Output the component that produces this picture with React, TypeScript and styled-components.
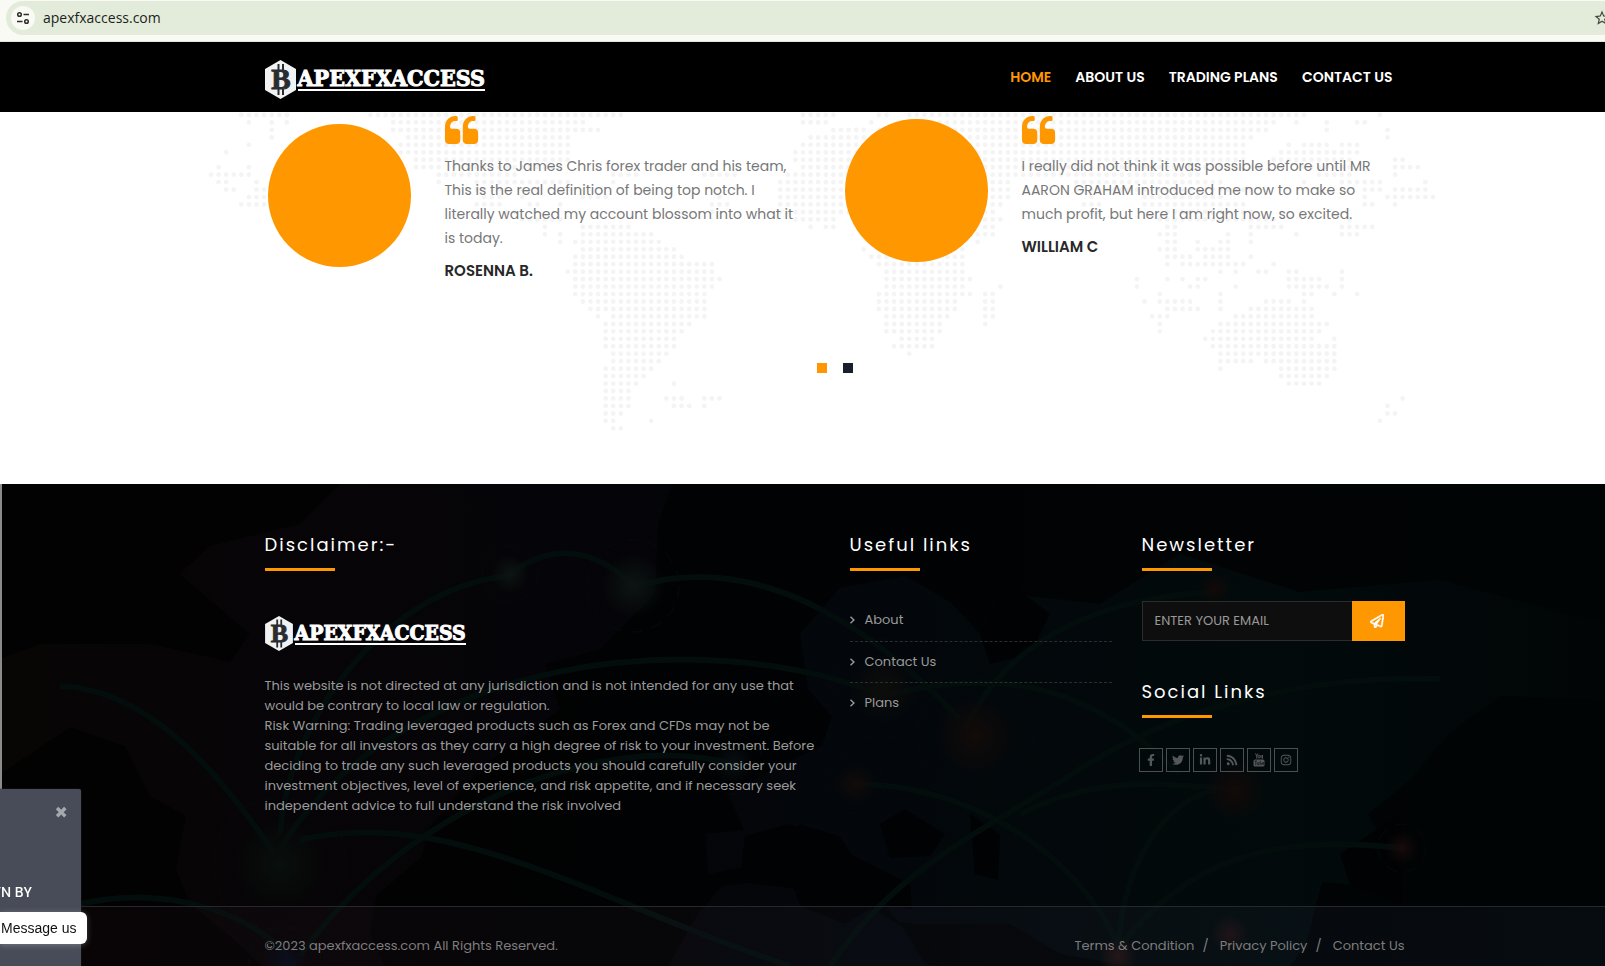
import React from 'react';
import styled, { createGlobalStyle } from 'styled-components';
import {
  FaFacebookF,
  FaInstagram,
  FaLinkedinIn,
  FaRegPaperPlane,
  FaRss,
  FaTwitter,
} from 'react-icons/fa';
import { MdStarBorder } from 'react-icons/md';

const accent = '#ff9800';
const bodyFont = "Poppins, 'Open Sans', sans-serif";

const GlobalStyle = createGlobalStyle`
  *, *::before, *::after { box-sizing: border-box; }
  body { margin: 0; background: #fff; font-family: ${bodyFont}; overflow-x: hidden; }
  h2, p, ul { margin: 0; padding: 0; }
  a { color: inherit; text-decoration: none; }
  button, input { font-family: inherit; }
`;

const Page = styled.div`
  display: flex;
  flex-direction: column;
  min-height: 100vh;
`;

/* The page content is centred in a view that starts 64px in. */
const Gutter = styled.div`
  padding-left: 64px;
`;

const Container = styled.div`
  position: relative;
  max-width: 1140px;
  margin: 0 auto;
`;

/* ---------- address bar ---------- */

const AddressBar = styled.div`
  padding: 1px 0 6px 6px;
  background: #f8faf3;
  border-bottom: 1px solid #dfe5da;
  overflow: hidden;
`;

const AddressPill = styled.div`
  display: flex;
  align-items: center;
  gap: 8px;
  height: 34px;
  padding-left: 5px;
  border-radius: 17px 0 0 17px;
  background: #e3ecdb;
  color: #1d1f1b;
`;

const SiteInfo = styled.button`
  display: grid;
  place-items: center;
  width: 24px;
  height: 24px;
  padding: 0;
  border: 0;
  border-radius: 50%;
  background: #f8faf3;
`;

const Address = styled.span`
  flex: 1;
  padding-bottom: 2px;
  font: 14px 'Open Sans', sans-serif;
`;

const Bookmark = styled.button`
  display: flex;
  margin-right: -6px;
  padding: 0;
  border: 0;
  background: none;
  color: #43473f;
`;

/* ---------- header ---------- */

const Header = styled.header`
  background: #000;
`;

const HeaderRow = styled(Container)`
  display: flex;
  align-items: center;
  justify-content: space-between;
  height: 70px;
`;

const HeaderLogo = styled.div`
  display: flex;
  padding-top: 4px;
`;

const Nav = styled.nav`
  display: flex;
  gap: 24px;
  padding-right: 12px;
`;

const NavLink = styled.a<{ $active?: boolean }>`
  color: ${(p) => (p.$active ? accent : '#fff')};
  font-size: 14px;
  font-weight: 600;
  line-height: 24px;
`;

const LogoLink = styled.a`
  display: inline-flex;
  align-items: center;
  gap: 2px;
`;

const LogoText = styled.span<{ $small?: boolean }>`
  border-bottom: 2px solid #fff;
  color: #fff;
  font-family: Algerian, 'DejaVu Serif Condensed', 'DejaVu Serif', serif;
  font-weight: 700;
  font-size: ${(p) => (p.$small ? 21 : 23)}px;
  line-height: ${(p) => (p.$small ? 20 : 22)}px;
  -webkit-text-stroke: 1px #fff;
`;

/* ---------- testimonials ---------- */

const Testimonials = styled.section`
  padding-bottom: 111px;
  background: #fff;
  overflow: hidden;
`;

const DotMap = styled.svg`
  position: absolute;
  top: 0;
  left: -60px;
`;

const Slides = styled.div`
  position: relative;
  display: grid;
  grid-template-columns: 1fr 1fr;
  gap: 14px;
`;

const Slide = styled.figure`
  display: grid;
  grid-template-columns: 143px 1fr;
  gap: 34px;
  margin: 0;
  padding: 4px 30px 0 3px;
`;

const Avatar = styled.div<{ $drop: number }>`
  height: 143px;
  margin-top: ${(p) => p.$drop}px;
  border-radius: 50%;
  background: ${accent};
`;

const QuoteMark = styled.svg`
  display: block;
  width: 34px;
  height: 28px;
  margin-bottom: 10px;
  fill: ${accent};
`;

const Quote = styled.blockquote`
  margin: 0 0 9px;
  color: #777;
  font-size: 14px;
  line-height: 24px;
`;

const Author = styled.figcaption`
  color: #282828;
  font-size: 15px;
  font-weight: 600;
  line-height: 24px;
`;

const Pager = styled.div`
  position: relative;
  display: flex;
  justify-content: center;
  gap: 16px;
  margin-top: 80px;
`;

const PagerDot = styled.button<{ $active?: boolean }>`
  width: 10px;
  height: 10px;
  padding: 0;
  border: 0;
  background: ${(p) => (p.$active ? accent : '#18202d')};
`;

/* ---------- footer ---------- */

const Footer = styled.footer`
  position: relative;
  flex: 1;
  display: flex;
  flex-direction: column;
  background: linear-gradient(90deg, #030202, #010203 45%, #010405);
  color: #9a9a9a;
  overflow: hidden;
`;

const WorldArt = styled.svg`
  position: absolute;
  inset: 0;
  width: 100%;
  height: 100%;
`;

const FooterMain = styled(Gutter)`
  position: relative;
  min-height: 422px;
  padding-top: 49px;
  border-left: 2px solid #8b8b8b;
  padding-left: 62px;
`;

const FooterColumns = styled(Container)`
  display: grid;
  grid-template-columns: 555fr 262fr 263fr;
  gap: 30px;
`;

const Heading = styled.h2`
  color: #fff;
  font-size: 18px;
  font-weight: 400;
  letter-spacing: 2px;
  line-height: 24px;

  &::after {
    content: '';
    display: block;
    width: 70px;
    height: 3px;
    margin-top: 11px;
    background: ${accent};
  }
`;

const FooterLogo = styled.div`
  display: flex;
  margin: 45px 0 25px;
`;

const Legal = styled.p`
  font-size: 13px;
  line-height: 20px;
`;

const LinkList = styled.ul`
  margin-top: 29px;
  list-style: none;
`;

const LinkItem = styled.li`
  height: 41px;

  & + & {
    border-top: 1px dashed #2b2d2e;
  }
`;

const ListLink = styled.a`
  display: flex;
  align-items: center;
  gap: 9px;
  height: 40px;
  font-size: 13px;
`;

const Subscribe = styled.form`
  display: grid;
  grid-template-columns: 1fr 53px;
  height: 40px;
  margin: 30px 0 39px;
`;

const EmailInput = styled.input`
  min-width: 0;
  padding: 0 12px;
  border: 1px solid #2c2c2c;
  border-right: 0;
  border-radius: 0;
  background: #0e0e0e;
  color: #999;
  font-size: 13px;

  &::placeholder {
    color: #999;
    opacity: 1;
  }
`;

const SendButton = styled.button`
  display: grid;
  place-items: center;
  padding: 0 2px 0 0;
  border: 0;
  background: ${accent};
  color: #fff;
  font-size: 14px;

  svg {
    stroke: #fff;
    stroke-width: 16px;
  }
`;

const Socials = styled.div`
  display: flex;
  gap: 3px;
  margin: 30px 0 0 -3px;
`;

const SocialLink = styled.a`
  display: grid;
  place-items: center;
  width: 24px;
  height: 24px;
  border: 1px solid #4c4f50;
  color: #55585a;
  font-size: 12px;
`;

const FooterBottom = styled(Gutter)`
  position: relative;
  flex: 1;
  padding-top: 27px;
  padding-bottom: 8px;
  border-top: 1px solid #26282b;
  background: linear-gradient(90deg, rgba(70, 30, 35, 0.09), rgba(60, 90, 130, 0.09));
  color: #7d7d7d;
  font-size: 13px;
  line-height: 24px;
`;

const BottomRow = styled(Container)`
  display: flex;
  justify-content: space-between;
`;

const BottomLinks = styled.nav`
  display: flex;

  a + a::before {
    content: '/';
    margin: 0 11px 0 8px;
  }
`;

/* ---------- floating widgets ---------- */

const Toast = styled.aside`
  position: fixed;
  left: 0;
  bottom: 0;
  display: flex;
  flex-direction: column;
  width: 81px;
  height: 177px;
  padding-top: 13px;
  border-radius: 0 2px 0 0;
  background: #484c58;
  color: #fff;
  box-shadow: 0 0 2px #222;
`;

const ToastClose = styled.button`
  align-self: flex-end;
  margin-right: 13px;
  padding: 0;
  border: 0;
  background: none;
  color: #a5a8ae;
  font: 16px/22px 'DejaVu Sans', sans-serif;
`;

const ToastText = styled.p`
  display: flex;
  justify-content: flex-end;
  width: 32px;
  margin-top: 57px;
  overflow: hidden;
  font-size: 14px;
  font-weight: 500;
  line-height: 22px;
  white-space: nowrap;
`;

const MessageButton = styled.button`
  position: fixed;
  left: 0;
  bottom: 22px;
  width: 87px;
  height: 32px;
  padding: 0 0 0 1px;
  border: 0;
  border-radius: 0 6px 6px 0;
  background: #fff;
  color: #111;
  font: 14px 'Liberation Sans', Arial, sans-serif;
  text-align: left;
  white-space: nowrap;
  box-shadow: 0 1px 6px rgba(255, 255, 255, 0.25);
`;

/* Dotted world map: one string per row, each entry a run of columns. */
const mapRows = [
  '4-10 21-54 78-82 88-89 92-144 154',
  '5 8 10 24-49 78-81 87 91-140 143 147 151-152',
  '8 24-51 82-86 88-139 147 155',
  '8 26-47 79-137 155',
  '5 25-47 78-136 142 144-147 149-151',
  '2 25-47 77-136 141-151',
  '27-47 77-136 140-150 156-157',
  '1 5 27-30 32-46 78-138 144-150 156-159',
  '0-5 30-40 53-56 65-69 76-130 146-150 156',
  '1-2 6 30 35-47 53 75-105 114-133 144 149-154 160',
  '2-3 6-7 35-38 41 75-105 114-137 152-154 156-160',
  '5-7 36-38 41 49-52 67 75-105 116 123-133 152 155-161',
  '4-7 35-38 42-43 46 66-68 75-104 115-117 123-136 152-153 156',
  '39-40 66 75-103 116-117 126-137',
  '41-46 77-82 100-104 125-140 150',
  '44 49-55 79 81-82 102-103 126-127 137-141 149-153',
  '44 46 49-58 101-103 125-127 134 137 143 149-151',
  '46 48-59 101 126-127 130 133-134 137',
  '49-61 86 88-99 125-127 130-134',
  '48-62 87-99 126-129 131-134 137',
  '48-66 88-99 126 128-136 140',
  '47-66 89-99 133 135 138-139 142-143 149',
  '48-67 89-100 122 126 128 130-131 142-146 149',
  '48-66 89-99 104 122 129-130 135 142-147 149',
  '48-65 88-100 102-103 125 133 144-145 148 151',
  '49-65 88-98 102-103 123 125-129 133 139-142 144',
  '50-65 88-98 102-103 126-130 133 137-145',
  '51 53-65 89-97 102-103 124-126 135-145',
  '52-63 89-96 102 125 133-147',
  '52-62 89-96 125 132-146',
  '52-61 91-95 131-145 148',
  '52-61 90-95 132-148',
  '53-60 92 133-148',
  '53-59 133-137 139-148',
  '52-58 133 141-148',
  '52-57 141-147',
  '52-56 61 142-146',
  '52-55',
  '52-55 60-62 65-67 157',
  '52-55 61-63 65 155',
  '52-54 155-156',
  '52-53 58 154',
  '53-54',
];
const colStep = 7.59;
const rowStep = 7.46;
const mapPath = mapRows
  .flatMap((row, r) =>
    row.split(' ').map((run) => {
      const [from, to = from] = run.split('-').map(Number);
      const x = 6 + from * colStep;
      return `M${x.toFixed(2)} ${(3 + r * rowStep).toFixed(2)}h${((to - from) * colStep + 0.01).toFixed(2)}`;
    }),
  )
  .join('');

const arcs = [
  'M510 90Q570 44 633 100',
  'M633 103C740 70 850 120 960 235',
  'M280 350C290 220 400 100 510 92',
  'M60 202C150 205 220 290 275 370',
  'M280 365C400 170 700 140 880 210',
  'M300 356C450 320 600 420 790 482',
  'M300 472C400 330 600 240 740 282',
  'M80 420C170 400 260 430 295 482',
  'M830 482C900 380 980 350 1080 285S1320 190 1440 195',
  'M855 300C970 300 1080 370 1120 465',
  'M870 215C1000 180 1090 200 1180 290',
  'M965 245C1010 150 1110 112 1215 108',
  'M1118 470C1120 380 1170 300 1235 305',
  'M1118 465C1190 370 1280 350 1402 364',
  'M1020 330C1100 290 1160 300 1235 305',
];

const nodes: [number, number, number, string][] = [
  [510, 90, 28, '#0d1412'],
  [633, 102, 46, '#0d1412'],
  [280, 380, 66, '#080f0c'],
  [883, 205, 50, '#0d0d0b'],
  [975, 252, 58, '#120b09'],
  [855, 300, 30, '#120b09'],
  [733, 280, 30, '#081013'],
  [1215, 105, 24, '#120a08'],
  [1235, 307, 44, '#120a08'],
  [1402, 364, 24, '#160a09'],
  [1230, 450, 28, '#1c0f10'],
  [1118, 472, 28, '#221210'],
  [285, 478, 36, '#060b1a'],
];

const landmasses = [
  'M0 175 40 160 150 160 230 178 250 150 180 90 210 62 300 40 340 0 672 0 658 40 655 110 600 165 545 180 560 225 480 285 428 345 422 372 376 412 370 448 384 482 262 482 228 450 190 420 176 385 186 332 150 312 125 262 70 243 0 290Z',
  'M668 482 698 430 722 402 790 394 800 422 845 440 872 424 905 445 935 482Z',
  'M706 350 744 346 728 310 770 286 822 262 832 232 808 205 800 150 840 104 905 92 950 118 990 160 1010 110 1100 120 1180 70 1300 108 1440 96 1605 140 1605 215 1500 212 1448 250 1410 296 1368 330 1392 372 1366 402 1322 398 1306 460 1290 482 1130 482 1060 470 1010 440 900 440 870 400 840 352 800 340 740 384 708 390Z',
];

const seas = [
  'M880 340 905 325 945 350 930 372 890 374Z',
  'M970 330 1000 350 998 396 975 390Z',
  'M745 352 790 340 850 370 910 400 912 425 880 420 800 405 740 398Z',
  'M900 438 925 480 940 482 915 440Z',
  'M980 150 1010 100 1050 130 1030 170 990 180Z',
  'M1340 370 1400 330 1402 420 1350 400Z',
];

const quotePath =
  'M768 832v384q0 80-56 136t-136 56h-384q-80 0-136-56t-56-136v-704q0-104 40.500-198.500t109.500-163.500 163.500-109.500 198.500-40.500h64q26 0 45 19t19 45v128q0 26-19 45t-45 19h-64q-106 0-181 75t-75 181v32q0 40 28 68t68 28h224q80 0 136 56t56 136z';

function BrandIcon({ width, height }: { width: number; height: number }) {
  return (
    <svg width={width} height={height} viewBox="0 0 31 39" aria-hidden="true">
      <path d="M15.500 0 31 9V30L15.500 39 0 30V9Z" fill="#f1f2f4" />
      <path d="M13.500 4v6M18 4v6M13.500 29v6M18 29v6" stroke="#2a2c30" strokeWidth="2" />
      <text
        x="16"
        y="29"
        textAnchor="middle"
        fontFamily="Liberation Serif, serif"
        fontWeight="700"
        fontSize="29"
        fill="#2a2c30"
        stroke="#2a2c30"
      >
        B
      </text>
    </svg>
  );
}

function Brand({ small }: { small?: boolean }) {
  return (
    <LogoLink href="#">
      <BrandIcon width={small ? 28 : 31} height={small ? 35 : 39} />
      <LogoText $small={small}>APEXFXACCESS</LogoText>
    </LogoLink>
  );
}

function Chevron() {
  return (
    <svg width="6" height="10" viewBox="0 0 6 10" fill="none" stroke="currentColor" strokeWidth="1.400" aria-hidden="true">
      <path d="M.5 1.800 3.900 5 .5 8.200" />
    </svg>
  );
}

/* Stacked emblem: small lettering marks over a rounded plate. */
function YoutubeStacked() {
  return (
    <svg width="12" height="14" viewBox="0 0 12 14" aria-hidden="true">
      <g fill="none" stroke="currentColor" strokeWidth="1">
        <path d="M2.500.5 3.700 3v2.500M4.900.5 3.700 3M8 2v2.500q.1.800 1.400.2M9.500 2v3.500" />
        <ellipse cx="6" cy="3.700" rx=".9" ry="1.500" />
      </g>
      <rect x=".5" y="6.500" width="11" height="7" rx="1.500" fill="currentColor" />
      <path d="M1.700 8h2.200M2.800 8v4.300M4.700 9.200v2.500h1.300V9.200M7.300 7.800v4M8.300 9.800v2M9.700 10.500h1v-1h-1v2.200h1" fill="none" stroke="#02070a" strokeWidth=".6" />
    </svg>
  );
}

const testimonials = [
  {
    drop: 8,
    author: 'ROSENNA B.',
    text: 'Thanks to James Chris forex trader and his team, This is the real definition of being top notch. I literally watched my account blossom into what it is today.',
  },
  {
    drop: 3,
    author: 'WILLIAM C',
    text: 'I really did not think it was possible before until MR AARON GRAHAM introduced me now to make so much profit, but here I am right now, so excited.',
  },
];

const socials = [
  { label: 'Facebook', Icon: FaFacebookF },
  { label: 'Twitter', Icon: FaTwitter },
  { label: 'LinkedIn', Icon: FaLinkedinIn },
  { label: 'RSS', Icon: FaRss },
  { label: 'YouTube', Icon: YoutubeStacked },
  { label: 'Instagram', Icon: FaInstagram },
];

export default function App() {
  return (
    <Page>
      <GlobalStyle />
      <AddressBar>
        <AddressPill>
          <SiteInfo aria-label="Site information">
            <svg width="14" height="14" viewBox="0 0 14 14" fill="none" stroke="#2b2e29" strokeWidth="1.500">
              <circle cx="3.500" cy="3.500" r="1.800" />
              <path d="M7.500 3.500H13M1 10.500h5.500" />
              <circle cx="10.500" cy="10.500" r="1.800" />
            </svg>
          </SiteInfo>
          <Address>apexfxaccess.com</Address>
          <Bookmark aria-label="Bookmark this page">
            <MdStarBorder size={18} />
          </Bookmark>
        </AddressPill>
      </AddressBar>

      <Header>
        <Gutter>
          <HeaderRow>
            <HeaderLogo>
              <Brand />
            </HeaderLogo>
            <Nav>
              <NavLink href="#" $active>HOME</NavLink>
              <NavLink href="#">ABOUT US</NavLink>
              <NavLink href="#">TRADING PLANS</NavLink>
              <NavLink href="#">CONTACT US</NavLink>
            </Nav>
          </HeaderRow>
        </Gutter>
      </Header>

      <Testimonials>
        <Gutter>
          <Container>
            <DotMap width="1240" height="330" viewBox="0 0 1240 330" aria-hidden="true">
              <path
                d={mapPath}
                fill="none"
                stroke="#f4f4f4"
                strokeWidth="4.800"
                strokeLinecap="round"
                strokeDasharray={`0 ${colStep}`}
              />
            </DotMap>
            <Slides>
              {testimonials.map((t) => (
                <Slide key={t.author}>
                  <Avatar $drop={t.drop} />
                  <div>
                    <QuoteMark viewBox="0 0 1664 1408" preserveAspectRatio="xMinYMid" aria-hidden="true">
                      <path d={quotePath} />
                      <path d={quotePath} transform="translate(896 0)" />
                    </QuoteMark>
                    <Quote>{t.text}</Quote>
                    <Author>{t.author}</Author>
                  </div>
                </Slide>
              ))}
            </Slides>
            <Pager>
              <PagerDot $active aria-label="Page 1" />
              <PagerDot aria-label="Page 2" />
            </Pager>
          </Container>
        </Gutter>
      </Testimonials>

      <Footer>
        <WorldArt viewBox="0 0 1605 482" preserveAspectRatio="xMidYMin slice" aria-hidden="true">
          <defs>
            <linearGradient id="land" x1="0" x2="1605" y1="0" y2="0" gradientUnits="userSpaceOnUse">
              <stop offset="0" stopColor="#080505" />
              <stop offset="0.350" stopColor="#050408" />
              <stop offset="0.550" stopColor="#03070b" />
              <stop offset="0.800" stopColor="#020a0b" />
              <stop offset="1" stopColor="#010506" />
            </linearGradient>
            {nodes.map(([x, y, , color]) => (
              <radialGradient id={`glow-${x}`} key={`${x}-${y}`}>
                <stop offset="0" stopColor={color} />
                <stop offset="1" stopColor={color} stopOpacity="0" />
              </radialGradient>
            ))}
          </defs>
          {landmasses.map((d) => <path key={d} d={d} fill="url(#land)" />)}
          {seas.map((d) => <path key={d} d={d} fill="#010204" />)}
          {arcs.map((d) => <path key={d} d={d} fill="none" stroke="#030d0c" strokeWidth="6" />)}
          {nodes.map(([x, y, r]) => (
            <g key={`${x}-${y}`}>
              <circle cx={x} cy={y} r={r * 0.7} fill={`url(#glow-${x})`} />
              <circle cx={x} cy={y} r={r} fill="none" stroke="#070a0c" strokeDasharray="12 9" />
            </g>
          ))}
        </WorldArt>

        <FooterMain>
          <FooterColumns>
            <div>
              <Heading>Disclaimer:-</Heading>
              <FooterLogo>
                <Brand small />
              </FooterLogo>
              <Legal>
                This website is not directed at any jurisdiction and is not intended for any use that would be
                contrary to local law or regulation.
                <br />
                Risk Warning: Trading leveraged products such as Forex and CFDs may not be suitable for all
                investors as they carry a high degree of risk to your investment. Before deciding to trade any
                such leveraged products you should carefully consider your investment objectives, level of
                experience, and risk appetite, and if necessary seek independent advice to full understand the
                risk involved
              </Legal>
            </div>
            <div>
              <Heading>Useful links</Heading>
              <LinkList>
                {['About', 'Contact Us', 'Plans'].map((label) => (
                  <LinkItem key={label}>
                    <ListLink href="#">
                      <Chevron />
                      {label}
                    </ListLink>
                  </LinkItem>
                ))}
              </LinkList>
            </div>
            <div>
              <Heading>Newsletter</Heading>
              <Subscribe onSubmit={(e) => e.preventDefault()}>
                <EmailInput type="email" placeholder="ENTER YOUR EMAIL" aria-label="Email" />
                <SendButton aria-label="Subscribe">
                  <FaRegPaperPlane />
                </SendButton>
              </Subscribe>
              <Heading>Social Links</Heading>
              <Socials>
                {socials.map(({ label, Icon }) => (
                  <SocialLink href="#" key={label} aria-label={label}>
                    <Icon />
                  </SocialLink>
                ))}
              </Socials>
            </div>
          </FooterColumns>
        </FooterMain>

        <FooterBottom>
          <BottomRow>
            <span>©2023 apexfxaccess.com All Rights Reserved.</span>
            <BottomLinks>
              <a href="#">Terms &amp; Condition</a>
              <a href="#">Privacy Policy</a>
              <a href="#">Contact Us</a>
            </BottomLinks>
          </BottomRow>
        </FooterBottom>
      </Footer>

      <Toast>
        <ToastClose aria-label="Close">✖</ToastClose>
        <ToastText>VN BY</ToastText>
      </Toast>
      <MessageButton>Message us</MessageButton>
    </Page>
  );
}
